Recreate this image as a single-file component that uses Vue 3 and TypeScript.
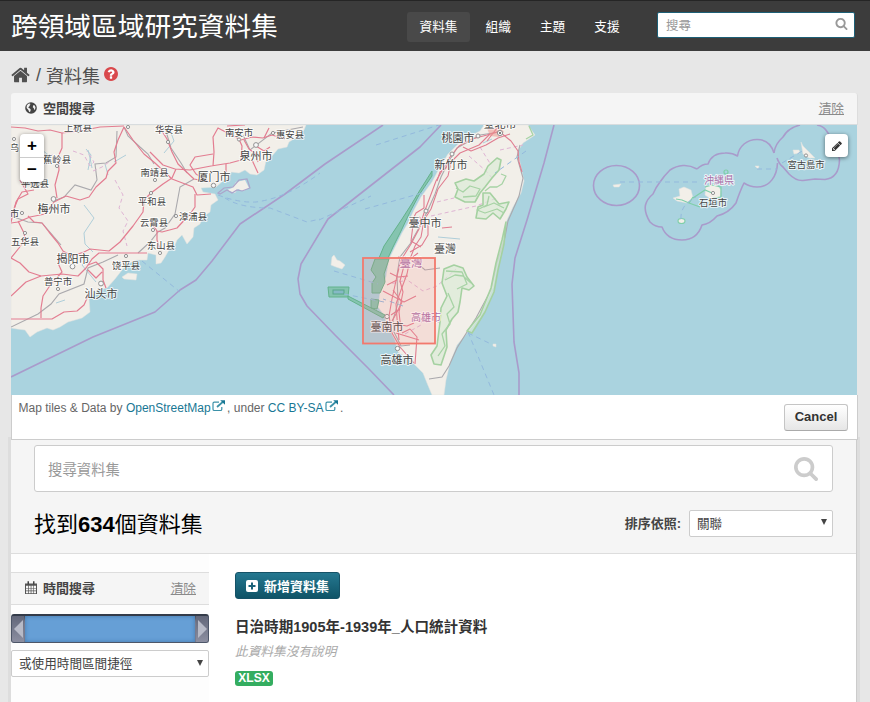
<script setup lang="ts">
interface MapLabel { text: string; x: number; y: number; size: number; tone?: string }
interface Town { x: number; y: number; r: number }

const navItems = ['資料集', '組織', '主題', '支援']

const labels: MapLabel[] = [
  { text: '上杭县', x: 78, y: 130.5, size: 9.3 },
  { text: '华安县', x: 169, y: 132.5, size: 9.3 },
  { text: '乌', x: 14.5, y: 151, size: 9 },
  { text: '蕉岭县', x: 57, y: 163, size: 9.3 },
  { text: '平远县', x: 35, y: 187, size: 9.3 },
  { text: '梅州市', x: 54, y: 213, size: 11 },
  { text: '市', x: 14.5, y: 217, size: 9.3 },
  { text: '五华县', x: 25, y: 245, size: 9.3 },
  { text: '揭阳市', x: 73, y: 263, size: 11 },
  { text: '普宁市', x: 58, y: 285, size: 9.3 },
  { text: '汕头市', x: 101, y: 298, size: 11 },
  { text: '饶平县', x: 126, y: 268.5, size: 9.3 },
  { text: '东山县', x: 161, y: 249, size: 9.3 },
  { text: '云霄县', x: 154, y: 226, size: 9.3 },
  { text: '漳浦县', x: 193, y: 220, size: 9.3 },
  { text: '平和县', x: 152, y: 205, size: 9.3 },
  { text: '南靖县', x: 154.5, y: 176, size: 9.3 },
  { text: '厦门市', x: 214, y: 181, size: 11 },
  { text: '泉州市', x: 256, y: 160, size: 11 },
  { text: '南安市', x: 239, y: 136, size: 9.3 },
  { text: '惠安县', x: 290, y: 138, size: 9.3 },
  { text: '臺北市', x: 500, y: 128, size: 11 },
  { text: '桃園市', x: 458, y: 142, size: 11 },
  { text: '新竹市', x: 451, y: 169, size: 11 },
  { text: '臺中市', x: 425, y: 227, size: 11 },
  { text: '臺灣', x: 445, y: 253, size: 11 },
  { text: '臺灣', x: 411, y: 267, size: 11.5, tone: 'region' },
  { text: '高雄市', x: 426, y: 321, size: 10, tone: 'region' },
  { text: '臺南市', x: 387, y: 331, size: 11 },
  { text: '高雄市', x: 397, y: 364, size: 11 },
  { text: '沖縄県', x: 719, y: 183.5, size: 10, tone: 'region' },
  { text: '石垣市', x: 713, y: 206, size: 9.3 },
  { text: '宮古島市', x: 806, y: 167.5, size: 9.3 },
]

const towns: Town[] = [
  { x: 78, y: 131, r: 1.6 }, { x: 14, y: 139, r: 1.6 }, { x: 57, y: 166, r: 1.6 },
  { x: 53.5, y: 199, r: 2.4 }, { x: 22, y: 213, r: 1.6 }, { x: 25, y: 233, r: 1.6 },
  { x: 72.5, y: 266.5, r: 2.4 }, { x: 58, y: 289, r: 1.6 }, { x: 101, y: 283.5, r: 2.4 },
  { x: 126, y: 256, r: 1.6 }, { x: 160, y: 253, r: 1.6 }, { x: 153, y: 230, r: 1.6 },
  { x: 176, y: 216, r: 1.6 }, { x: 151, y: 193, r: 1.6 }, { x: 155, y: 180, r: 1.6 },
  { x: 213.5, y: 185.5, r: 2.2 }, { x: 256, y: 145, r: 2.4 }, { x: 239, y: 139.5, r: 1.6 },
  { x: 273, y: 133, r: 1.6 }, { x: 128, y: 127, r: 1.6 }, { x: 168, y: 142, r: 1.6 },
  { x: 500, y: 133, r: 2.6 }, { x: 478, y: 136, r: 2 }, { x: 452, y: 154, r: 2 },
  { x: 426, y: 211, r: 2 }, { x: 387, y: 316.5, r: 2.2 }, { x: 397.5, y: 348.5, r: 2.2 },
  { x: 713, y: 193, r: 1.6 }, { x: 806, y: 155.5, r: 1.6 },
]

const roads: string[] = [
  'M11 127L25 128 38 131 50 130 62 133 80 131 100 127 124 126',
  'M62 133L62 148 58 157 59 170 55 185 57 198',
  'M20 180L28 194 18 199 13 211 11 216',
  'M34 190L22 192 16 202 11 222',
  'M124 127L118 140 114 152 116 163 108 171 106 178 96 187 89 197 80 200 66 196 54 202 45 214 30 217 18 222 11 223',
  'M28 216L34 222 42 223 49 232 58 243 63 251 72 256 84 252 90 249 109 251 120 242 133 226 143 212 144 200 151 193 163 184 172 178 176 169',
  'M18 221L24 233 25 239 19 248 11 258',
  'M11 258L20 263 29 272 41 276 62 274 78 276 86 268 92 259 99 253 118 253 147 253',
  'M11 296L26 282 41 276',
  'M11 319L52 319 64 312 77 311 84 305 88 296',
  'M63 252L58 263 62 272 51 284 43 296 41 308 41 318',
  'M88 265L96 262 103 269 103 280 106 288M88 270L96 278 102 272',
  'M124 127L133 140 144 154 155 163 172 179 193 187 197 195 211 194',
  'M158 125L167 139 172 152 178 164 194 179 210 182',
  'M150 152L163 165 175 169 190 170 211 166 230 163 241 160 242 146 239 139 218 128 213 137 214 152 213 166',
  'M213 154L195 157 190 165 196 174 207 181',
  'M151 222L157 231 162 232 177 228 190 214 195 207 195 194',
  'M241 140L252 137 263 138 272 135 285 139M252 160L258 173M226 164L226 172M256 146L264 151 270 147',
  'M264 138L269 128M227 126L245 125',
  'M244 140L249 149 256 154 258 162M157 231L157 240 160 249',
]

const taiwanRoads: string[] = [
  'M500 131L487 135 472 139 459 146 450 157 443 169 436 181 430 197 424 213 419 229 411 244 401 260 397 276 392 299 389 316 392 333 400 347 414 363',
  'M490 134L479 145 460 153 451 162 448 176 438 189 431 209 424 220 421 237 415 246 410 259 407 274 401 290 396 304 397 318 399 340',
  'M500 132L511 141 518 151 519 162 522 172',
  'M463 147L471 151 486 145 498 138 510 134M437 181L440 172 446 168 449 158',
  'M419 217L428 225 428 235 422 245 410 252M423 219L413 225 411 241 421 247',
  'M393 290L402 302 396 314 392 321M398 257L409 260 418 253M402 333L410 329 417 337 415 364',
  'M387 285L397 280M383 291L404 302 416 296M391 315L400 309M395 324L407 326 414 323M396 333L419 340',
  'M424 195L424 208 416 213 411 223M442 228L452 227M497 128L487 141',
  'M405 262L400 281 403 292 399 312 401 330M390 273L398 277 408 276',
]

const greenAreas: string[] = [
  'M455 183L466 179 474 181 484 174 488 166 497 158 501 160 499 170 492 178 485 187 480 193 475 202 465 202 455 197 458 189Z',
  'M483 193L490 193 499 204 509 202 506 209 500 219 493 213 486 219 476 218 478 207 483 205Z',
  'M444 269L454 265 463 268 467 277 474 286 469 290 462 288 460 302 458 312 452 319 446 330 447 347 441 365 434 364 431 355 437 346 440 322 441 308 447 296 442 283Z',
  'M502 240L506 222 504 244 498 270 494 292 485 312 472 333 467 331 480 315 491 288 496 263Z',
]
</script>

<template>
  <div class="page">
    <header class="masthead">
      <h1 class="brand">跨領域區域研究資料集</h1>
      <nav class="nav">
        <a v-for="(item, i) in navItems" :key="item" class="nav-item" :class="{ active: i === 0 }">{{ item }}</a>
      </nav>
      <div class="site-search">
        <span>搜尋</span>
        <svg class="icon-small-search" viewBox="0 0 1792 1792"><path d="M1216 832q0-185-131.5-316.5t-316.5-131.5-316.5 131.5-131.5 316.5 131.5 316.5 316.5 131.5 316.5-131.5 131.5-316.5zm512 832q0 52-38 90t-90 38q-54 0-90-38l-343-342q-179 124-399 124-143 0-273.5-55.5t-225-150-150-225-55.5-273.5 55.5-273.5 150-225 225-150 273.5-55.5 273.5 55.5 225 150 150 225 55.5 273.5q0 220-124 399l343 343q37 37 37 90z" /></svg>
      </div>
    </header>

    <div class="breadcrumb">
      <svg class="icon-home" viewBox="50 200 1690 1400"><path d="M1472 992v480q0 26-19 45t-45 19h-384v-384h-256v384h-384q-26 0-45-19t-19-45v-480q0-1 .5-3t.5-3l575-474 575 474q1 2 1 6zm223-69l-62 74q-8 9-21 11h-3q-13 0-21-7l-692-577-692 577q-12 8-24 7-13-2-21-11l-62-74q-8-10-7-23.5t11-21.5l719-599q32-26 76-26t76 26l244 204v-195q0-14 9-23t23-9h192q14 0 23 9t9 23v408l219 182q10 8 11 21.5t-7 23.5z" /></svg>
      <span class="slash">/</span>
      <span class="crumb">資料集</span>
      <svg class="icon-help" viewBox="128 128 1536 1536"><circle cx="896" cy="896" r="700" fill="#fff" /><path d="M1024 1376v-192q0-14-9-23t-23-9h-192q-14 0-23 9t-9 23v192q0 14 9 23t23 9h192q14 0 23-9t9-23zm256-672q0-88-55.5-163t-138.5-116-170-41q-243 0-371 213-15 24 8 42l132 100q7 6 19 6 16 0 25-12 53-68 86-92 34-24 86-24 48 0 85.5 26t37.5 59q0 38-20 61t-68 45q-63 28-115.5 86.5t-52.5 125.5v36q0 14 9 23t23 9h192q14 0 23-9t9-23q0-19 21.5-49.5t54.5-49.5q32-18 49-28.5t46-35 44.5-48 28-60.5 12.5-81zm384 192q0 209-103 385.5t-279.5 279.5-385.5 103-385.5-103-279.5-279.5-103-385.5 103-385.5 279.5-279.5 385.5-103 385.5 103 279.5 279.5 103 385.5z" /></svg>
    </div>

    <section class="map-widget">
      <div class="widget-head map-head">
        <svg class="icon-globe" viewBox="0 0 12 12"><circle cx="6" cy="6" r="5.8" fill="#444" /><path d="M1.8 3.4L3.4 1.7 5 1.5 5.5 2.3 4.6 3 4.9 3.8 3.8 4.7 3.3 5.8 4.9 6.6 5.8 7.8 5.2 9.8 4.2 9.9 3.4 7.9 1.6 5.9ZM8.2 3.2L9.5 3.2 10.5 5.2 10.1 7.2 9.3 8 8.8 6.3 7.8 5.2Z" fill="#f1f1f1" /></svg>
        <span class="widget-title">空間搜尋</span>
        <a class="clear">清除</a>
      </div>
      <div class="map">
        <svg class="map-canvas" viewBox="11 125 846 270">
          <rect x="11" y="125" width="846" height="270" fill="#aad3df" />
          <g fill="#f2efe9" stroke="#e2e3df" stroke-width=".5">
            <path d="M11 125L306 125 304 130 297 137 289 142 287 147 278 149 272 156 266 161 264 170 257 175 250 174 245 170 239 173 231 172 229 177 224 180 216 187 201 188 203 192 215 194 218 200 211 205 210 212 203 217 200 224 194 228 193 237 187 244 182 235 177 240 175 245 169 250 165 257 161 263 156 264 156 255 148 253 147 260 137 260 129 263 122 270 115 279 107 288 97 290 89 298 90 312 82 318 68 322 60 327 53 330 47 328 37 332 30 337 25 330 17 329 11 328Z" />
            <path d="M484 125L480 131 470 136 458 144 448 154 440 167 432 182 421 197 414 210 408 223 402 233 395 247 389 259 386 277 380 293 378 307 384 315 388 327 395 340 398 352 406 357 416 366 423 373 427 383 432 395 444 395 446 380 450 363 457 345 468 332 480 317 493 287 498 257 503 240 507 220 513 207 521 193 524 181 522 172 519 158 518 151 523 143 535 135 528 125Z" />
            <path d="M122 277L128 273 137 274 136 280 124 279ZM332 257L334 255 337 260 340 261 345 265 342 269 336 267 331 265ZM673 198L680 196 679 189 684 187 691 190 693 198 687 203 677 201ZM706 186L716 184 721 190 720 197 711 199 705 195ZM793 150L799 150 800 153 794 154ZM801 142L803 146 808 151 815 158 809 158 803 154ZM613 185L621 184 619 187 614 187ZM755 166L759 166 758 169ZM493 344L496 344 496 347 493 346Z" />
            <ellipse cx="681.5" cy="221" rx="3.5" ry="2.2" />
          </g>
          <path class="island" d="M223 192L232 188 236 182 245 180 249 188 243 191 238 189 235 193 227 190Z" />
          <g fill="none" stroke="#a7c9d7" stroke-width=".9">
            <path d="M84 205L94 218 84 233 85 244 93 252M86 149L91 155 88 170M170 130L174 141 164 153M114 162L126 155M42 150L51 157M88 258L82 265 96 282" />
            <path d="M88 150L90 158 92 168M108 175L105 164M56 303L65 300M438 237L460 239M483 143L492 139" />
          </g>
          <g fill="none" stroke="#aaa9ad" stroke-width="1.1">
            <path d="M124 127L128 136 140 147 148 154 154 164M117 131L116 157 106 163 95 164 97 180 91 190 75 185 64 197 56 200M11 216L28 222 42 223 61 245M11 327L38 314 51 304 59 294 84 284 88 268 103 262 118 255M138 253L150 242 158 232 165 228 175 214 180 187 194 179M165 128L171 148 181 163 187 173M243 135L250 150 272 133 303 127" />
            <path d="M500 132L480 135 457 148 449 161 441 177 435 194 427 212 420 226 410 244 400 257 397 275 398 303 393 320 394 332 401 346 410 345M429 379L442 377 449 366 457 348 467 332 476 318 491 290 497 263 505 237 508 221 519 196 523 178 517 157 520 145M417 263L425 270 440 268" />
          </g>
          <g fill="none" stroke="#dfb4d4" stroke-width="1" stroke-dasharray="4 3">
            <path d="M73 151L84 155 90 166 94 162 87 151M93 171L102 167 109 162M115 180L123 195 119 208 128 221 123 231 127 246M42 156L54 155M469 156L486 171 493 179M480 147L491 165M500 150L523 145M437 202L454 198M431 216L476 206 497 198M403 277L423 291 437 286 456 269M403 281L390 284M405 334L421 325 423 315 440 323" />
          </g>
          <g fill="none" stroke="#e37d91" stroke-width="1.2" stroke-linejoin="round">
            <path v-for="road in roads" :key="road" :d="road" />
          </g>
          <g fill="none" stroke="#e07d90" stroke-width="1.1" stroke-linejoin="round">
            <path v-for="road in taiwanRoads" :key="road" :d="road" />
          </g>
          <path d="M487 128L500 127 504 132 499 137 490 136Z" fill="#f08f8a" opacity=".5" />
          <g fill="#d9e9d5" fill-opacity=".65" stroke="#a5d1a1" stroke-width="1.6" stroke-linejoin="round">
            <path v-for="area in greenAreas" :key="area" :d="area" />
          </g>
          <g fill="none" stroke="#a7d3a5" stroke-width="1.3" stroke-linejoin="round">
            <path d="M501 174L506 176 502 184 497 187 490 187 485 191M456 188L463 192 470 186 480 189 476 196 463 197M489 196L487 205 477 210 485 213 497 209 504 213M484 207L494 203 504 208M445 280L455 275 463 276 471 283M446 271L462 272 467 284 457 289M448 293L454 307 447 314 450 324 442 334 445 346 438 356" />
            <path d="M529 126L533 135 526 139" />
          </g>
          <g fill="#7cc0a4" fill-opacity=".8" stroke="#63b28b" stroke-width="1">
            <path d="M432 171L420 190 411 205 402 219 392 234 384 246 379 258 388 258 393 247 401 231 410 212 419 195 432 176Z" />
            <path d="M375 259L389 259 384 274 385 282 380 293 372 293 372 283 376 277 371 270ZM371 299L379 300 377 309 371 308ZM328 287L349 287 348 297 329 297ZM348 296L385 315 383 318 348 299Z" />
          </g>
          <rect x="333" y="290" width="11" height="4" fill="#86b9c6" stroke="#58a68a" />
          <g fill="none" stroke="#7fcfa9" stroke-width="1.2"><path d="M676 199L682 200 689 203 693 197M689 203L700 207M693 198L705 190 712 193M705 187L712 185 721 187 721 197 713 198" /><ellipse cx="681.5" cy="221" rx="3.5" ry="2.5" /><circle cx="726" cy="172" r="2" /></g>
          <g fill="none" stroke="#a99bcb" stroke-width="1.6" stroke-linejoin="round">
            <path d="M11 377L52 357 93 337 155 312 180 290 196 280 212 261 240 224 285 194 325 164 383 125" />
            <path d="M441 125L420 147 374 183 328 219 301 264 298 279 300 294 307 306 335 335 368 368 394 395" />
            <path d="M554 125L544 163 527 220 515 258 512 284 514 342 519 373 519 395" />
            <ellipse cx="616.5" cy="185.5" rx="23" ry="20" />
            <path d="M697 169Q690 165 683 165.500 676 166 670 170 664 176 660 182 656 187 653 194 647 199 645.500 205 644 212 650 222 655 227 662 227 667 240 682 240 697 240 702 225 710 224 717 216 729 213 736 203 740 191 744 183 750 187 757 187C770 187 777 176 777.500 163M774 153C771 143 764 139.500 757 139.500 747 139.500 739 146 737.500 156Q732 152.500 725 153 712 153 708 164 702 164 697 169" />
            <path d="M774 153Q775 144 783 137 788 128 800 125M817 125Q824 126 828 133 838 146 839.500 160 839 178 825 179.500L815 179 803 180.500Q796 181 789 174L783 167Q779 164 777 158" />
          </g>
          <g fill="none" stroke="#93b9dd" stroke-width="1" stroke-dasharray="5 4">
            <path d="M218 195Q239 203 256 202 287 198 320 173M225 198Q240 208 270 208L307 222 320 219M142 261L180 292M376 145L439 125M319 220L371 196M365 209L422 193M620 182L698 182M757 169L777 169M681 219Q680 205 696 197M334 271L378 284M344 294L384 302M468 333L491 344M468 332L494 395M403 306L383 299M782 163L804 150M526 151L495 173" />
          </g>
          <g fill="none" stroke="#aba5cb" stroke-width="1.2">
            <path d="M218 193L224 188 233 187 239 180 247 179 250 188 242 191 237 190 232 193 227 190 220 194Z" />
          </g>
          <g fill="#f8f8f8" stroke="#888" stroke-width=".9">
            <circle v-for="(town, i) in towns" :key="i" :cx="town.x" :cy="town.y" :r="town.r" />
          </g>
          <circle cx="500" cy="133" r="1" fill="#555" />
          <g class="labels">
            <text v-for="(label, i) in labels" :key="i" :x="label.x" :y="label.y" :font-size="label.size" :class="label.tone">{{ label.text }}</text>
          </g>
          <rect x="363" y="258" width="72" height="85.5" fill="#fb8a80" fill-opacity=".17" stroke="#f2796d" stroke-width="1.8" />
        </svg>
        <div class="zoom-control"><span class="zoom-in">+</span><span>−</span></div>
        <div class="draw-control">
          <svg viewBox="128 128 1536 1536"><path d="M491 1536l91-91-235-235-91 91v107h128v128h107zm523-928q0-22-22-22-10 0-17 7l-542 542q-7 7-7 17 0 22 22 22 10 0 17-7l542-542q7-7 7-17zm-54-192l416 416-832 832h-416v-416zm683 96q0 53-37 90l-166 166-416-416 166-165q36-38 90-38 53 0 91 38l235 234q37 39 37 91z" /></svg>
        </div>
      </div>
      <div class="map-foot">
        <p class="attribution">Map tiles &amp; Data by <a>OpenStreetMap<svg class="icon-external" viewBox="0 0 14 12"><path d="M7 2.2H2.3Q1 2.2 1 3.5V9.2Q1 10.5 2.3 10.5H8.5Q9.8 10.5 9.8 9.2V7" /><path d="M5 7L11 1.8" stroke-width="1.8" /><path d="M8.2 .2H13V4.8Z" class="head" /></svg></a>, under <a>CC BY-SA<svg class="icon-external" viewBox="0 0 14 12"><path d="M7 2.2H2.3Q1 2.2 1 3.5V9.2Q1 10.5 2.3 10.5H8.5Q9.8 10.5 9.8 9.2V7" /><path d="M5 7L11 1.8" stroke-width="1.8" /><path d="M8.2 .2H13V4.8Z" class="head" /></svg></a>.</p>
        <button class="cancel">Cancel</button>
      </div>
    </section>

    <main class="panel">
      <div class="search-area">
        <div class="dataset-search">
          <span>搜尋資料集</span>
          <svg viewBox="64 128 1664 1664"><path d="M1216 832q0-185-131.5-316.5t-316.5-131.5-316.5 131.5-131.5 316.5 131.5 316.5 316.5 131.5 316.5-131.5 131.5-316.5zm512 832q0 52-38 90t-90 38q-54 0-90-38l-343-342q-179 124-399 124-143 0-273.5-55.5t-225-150-150-225-55.5-273.5 55.5-273.5 150-225 225-150 273.5-55.5 273.5 55.5 225 150 150 225 55.5 273.5q0 220-124 399l343 343q37 37 37 90z" /></svg>
        </div>
        <div class="result-bar">
          <h2>找到<b>634</b>個資料集</h2>
          <label>排序依照:</label>
          <div class="select sort"><span>關聯</span><i class="arrow"></i></div>
        </div>
      </div>
      <div class="columns">
        <aside class="sidebar">
          <div class="widget-head time-head">
            <svg class="icon-calendar" viewBox="0 0 12 13"><path d="M0 2.500H12V13H0Z" fill="#555" /><path d="M1 4.800H3V7H1ZM3.700 4.800H5.700V7H3.700ZM6.400 4.800H8.400V7H6.400ZM9 4.800H11V7H9ZM1 7.600H3V9.600H1ZM3.700 7.600H5.700V9.600H3.700ZM6.400 7.600H8.400V9.600H6.400ZM9 7.600H11V9.600H9ZM1 10.200H3V12.200H1ZM3.700 10.200H5.700V12.200H3.700ZM6.400 10.200H8.400V12.200H6.400ZM9 10.200H11V12.200H9Z" fill="#f5f5f5" /><path d="M2.500 .3H4V3.500H2.500ZM8 .3H9.500V3.500H8Z" fill="#444" /></svg>
            <span class="widget-title">時間搜尋</span>
            <a class="clear">清除</a>
          </div>
          <div class="slider">
            <span class="handle left"></span>
            <span class="range"></span>
            <span class="handle right"></span>
          </div>
          <div class="select shortcut"><span>或使用時間區間捷徑</span><i class="arrow"></i></div>
        </aside>
        <section class="results">
          <button class="add">
            <svg viewBox="0 0 12 12"><rect width="12" height="12" rx="2" fill="#fff" /><path d="M6 2.5V9.5M2.5 6H9.5" stroke="#1b6279" stroke-width="2" /></svg>
            新增資料集
          </button>
          <h3>日治時期1905年-1939年_人口統計資料</h3>
          <p class="empty">此資料集沒有說明</p>
          <span class="format">XLSX</span>
        </section>
      </div>
    </main>
  </div>
</template>

<style>
body { background: #e7e7e7; }
</style>

<style scoped>
* { box-sizing: border-box; }
.page {
  height: 702px;
  overflow: hidden;
  font-family: "Liberation Sans", "Noto Sans CJK TC", sans-serif;
  font-size: 13px;
  color: #444;
}
h1, h2, h3, p { margin: 0; font-weight: 400; }
svg { display: block; flex: none; }
.masthead {
  height: 51px;
  display: flex;
  padding-left: 11px;
  background: #3c3c3c;
  border-top: 1px solid #252525;
  color: #fff;
}
.brand { width: 396px; padding-top: 1px; font-size: 26.7px; line-height: 51px; white-space: nowrap; }
.nav { width: 250px; display: flex; padding-top: 11px; }
.nav-item { height: 30px; padding: 0 12.5px; margin-right: 4px; line-height: 31px; font-size: 12.7px; border-radius: 3px; white-space: nowrap; }
.nav-item.active { background: #494949; margin-right: 3px; }
.site-search {
  width: 198px;
  height: 26px;
  margin-top: 11px;
  padding: 0 6px 1px 8px;
  display: flex;
  align-items: center;
  justify-content: space-between;
  background: #fff;
  border: 1px solid #1d6077;
  border-radius: 2px;
  color: #999;
  font-size: 12.5px;
}
.icon-small-search { width: 13px; height: 13px; margin-top: -2px; fill: #999; }
.breadcrumb { height: 42px; display: flex; align-items: center; padding: 6px 0 0 11px; font-size: 18px; color: #505050; }
.icon-home { width: 19px; height: 16px; fill: #505050; }
.slash { margin: 0 5px 0 6px; }
.crumb { font-size: 18px; }
.icon-help { width: 14px; height: 14px; margin: -2px 0 0 4px; fill: #d9494c; }
.map-widget { width: 847px; margin-left: 11px; position: relative; }
.widget-head { display: flex; align-items: center; background: #f5f5f5; color: #444; }
.map-head { height: 32px; padding: 0 13px 2px 14px; border-bottom: 1px solid #d8dcde; border-right: 1px solid #ddd; border-radius: 3px 3px 0 0; }
.widget-title { font-weight: 700; font-size: 13px; }
.clear { margin-left: auto; color: #8a8a8a; font-size: 12.7px; text-decoration: underline; }
.icon-globe { width: 12px; height: 12px; margin-right: 6px; }
.map { height: 270px; position: relative; }
.map-canvas { width: 846px; height: 270px; }
.labels text {
  font-family: "Noto Sans CJK SC", sans-serif;
  fill: #454545;
  text-anchor: middle;
  stroke: #fff;
  stroke-width: 2px;
  stroke-opacity: .75;
  stroke-linejoin: round;
  paint-order: stroke;
}
.labels .region { fill: #a86fa9; }
.island { fill: #f2efe9; }
.zoom-control {
  position: absolute;
  left: 9px;
  top: 9px;
  width: 24px;
  height: 48px;
  border-radius: 4px;
  background: #fff;
  box-shadow: 0 1px 4px rgba(0, 0, 0, .45);
  display: flex;
  flex-direction: column;
  color: #000;
  font: bold 17px/23px "Liberation Sans", sans-serif;
  text-align: center;
}
.zoom-control span { height: 24px; }
.zoom-in { border-bottom: 1px solid #ccc; }
.draw-control {
  position: absolute;
  right: 10px;
  top: 9px;
  width: 23px;
  height: 23px;
  display: grid;
  place-items: center;
  border-radius: 4px;
  background: #fff;
  box-shadow: 0 1px 4px rgba(0, 0, 0, .5);
}
.draw-control svg { width: 10px; height: 10px; fill: #333; }
.map-foot { height: 45px; display: flex; justify-content: space-between; padding: 5px 9px 0 6.5px; background: #fff; border: 1px solid #ccc; border-top: 0; }
.attribution { font-size: 12px; line-height: 16px; color: #666; }
.attribution a { color: #187794; }
.icon-external { display: inline-block; width: 14px; height: 12px; margin: 0 1px 0 1.5px; vertical-align: 0; fill: none; stroke: #3b91a8; stroke-width: 1.2; }
.icon-external .head { fill: #187794; stroke: none; }
.cancel {
  width: 64px;
  height: 27px;
  margin-top: 4px;
  padding: 0 0 2px;
  border: 1px solid #c5c5c5;
  border-bottom-color: #aaa;
  border-radius: 3px;
  background: linear-gradient(#fff, #e6e6e6);
  font: bold 13px "Liberation Sans", sans-serif;
  color: #333;
}
.panel { width: 846px; height: 262px; margin-left: 11px; background: #fff; border-right: 1px solid #ccc; box-shadow: 0 0 0 3px rgba(0, 0, 0, .04); }
.search-area { height: 114px; padding: 5px 23px 0; background: #f5f5f5; border-bottom: 1px solid #ddd; }
.dataset-search {
  height: 47px;
  display: flex;
  align-items: center;
  justify-content: space-between;
  padding: 0 14px 0 13px;
  background: #fff;
  border: 1px solid #ccc;
  border-radius: 3px;
  color: #999;
  font-size: 14.4px;
}
.dataset-search svg { width: 24px; height: 24px; fill: #ccc; }
.result-bar { height: 62px; display: flex; align-items: center; }
h2 { margin: -2px auto 0 0; font-size: 22px; color: #000; }
label { margin: -2px 8px 0 0; font-size: 13px; font-weight: 700; }
.select {
  display: flex;
  align-items: center;
  justify-content: space-between;
  padding: 0 5px 2px 7px;
  background: #fff;
  border: 1px solid #ccc;
  border-radius: 2px;
  height: 27px;
  font-size: 12.6px;
  color: #444;
}
.sort { width: 144px; }
.arrow { border: 3.5px solid transparent; border-top: 6px solid #444; border-bottom: 0; }
.columns { display: flex; height: 148px; }
.sidebar { width: 198px; padding-top: 18px; background: #fdfdfd; }
.time-head { height: 33px; padding: 0 13px 2px 14px; border: 1px solid #ddd; border-width: 1px 0; }
.icon-calendar { width: 12px; height: 13px; margin-right: 6px; }
.slider {
  height: 29px;
  margin: 9px 0 7px;
  display: flex;
  border: 1px solid #4d5668;
  border-top: 2px solid #333b49;
  border-radius: 3px;
  overflow: hidden;
  background: #777b8e;
  box-shadow: inset 0 3px 4px #454b5b;
}
.range { flex: 1; margin: 0 1px; background: #669fd6; box-shadow: inset 0 0 4px #4478ac; }
.handle { width: 12px; display: grid; place-items: center; background: linear-gradient(#62677a, #8c8fa1); }
.handle::after { content: ""; border: 9px solid transparent; }
.handle.left::after { border-right: 9px solid #b7bac7; border-left: 0; }
.handle.right::after { border-left: 9px solid #b7bac7; border-right: 0; }
.shortcut { width: 198px; }
.results { padding: 18px 0 0 26px; }
.add {
  display: flex;
  align-items: center;
  width: 105px;
  height: 27px;
  padding: 0 0 0 10px;
  gap: 6px;
  border: 1px solid #155267;
  border-radius: 3px;
  background: linear-gradient(#257890, #0f5367);
  color: #fff;
  font: bold 13px "Liberation Sans", "Noto Sans CJK TC", sans-serif;
  white-space: nowrap;
}
.add svg { width: 12px; height: 12px; }
h3 { margin-top: 17px; font-size: 14.55px; line-height: 22px; font-weight: 700; color: #333; }
.empty { margin-top: 4px; font-size: 12.7px; line-height: 20px; font-style: italic; color: #aaa; }
.format {
  display: block;
  width: 38px;
  height: 15px;
  margin-top: 9px;
  border-radius: 3px;
  background: #34ad60;
  color: #fff;
  font: bold 12px/15px "Liberation Sans", sans-serif;
  text-align: center;
}
</style>
